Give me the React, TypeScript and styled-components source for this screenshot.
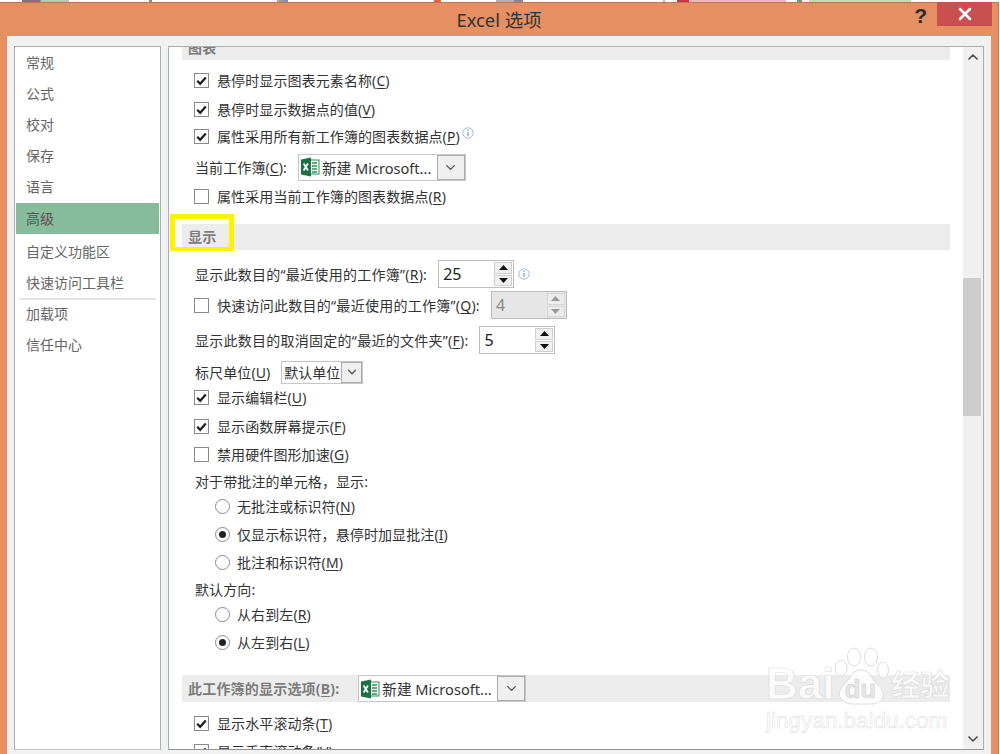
import React from 'react'
import styled, { createGlobalStyle } from 'styled-components'
import { ChevronDown, ChevronUp, X } from 'lucide-react'

const GlobalStyle = createGlobalStyle`
  html, body {
    margin: 0;
    padding: 0;
    background: #fff;
  }
  #root {
    width: 1000px;
    height: 754px;
    overflow: hidden;
    font-family: "Noto Sans", "Noto Sans CJK SC", sans-serif;
    font-size: 14px;
    color: #333;
  }
`

const BehindStrip = styled.div`
  height: 2px;
  background: linear-gradient(
    to right,
    #fff 22px, #777 22px, #777 40px, #9fd3a8 41px, #9fd3a8 69px, #fff 69px,
    #fff 149px, #6c8fd0 149px, #6c8fd0 152px, #fff 152px,
    #fff 277px, #c9a36a 277px, #6c8fd0 288px, #fff 288px,
    #fff 434px, #e0663c 434px, #e0663c 441px, #fff 441px,
    #fff 496px, #aab4c8 496px, #aab4c8 513px, #888 515px, #888 523px, #fff 523px,
    #fff 663px, #8ed08e 663px, #8ed08e 665px, #fff 665px,
    #fff 677px, #c8373c 677px, #c8373c 689px, #f5b4bc 689px, #f5b4bc 786px, #fff 786px,
    #fff 797px, #5aa85a 797px, #5aa85a 802px, #fff 802px,
    #fff 809px, #b4e2b0 809px, #b4e2b0 911px, #fff 911px
  );
`

const Window = styled.div`
  width: 999px;
  height: 752px;
  display: flex;
  flex-direction: column;
  position: relative;
  background: #e58f63;
  border-right: 1px solid #b8795a;
  border-top: 1px solid #b8795a;
  box-sizing: border-box;
`

const TitleBar = styled.div`
  height: 33px;
  flex: none;
  display: grid;
  grid-template-columns: 1fr auto 1fr;
`

const Title = styled.div`
  font-size: 18.4px;
  line-height: 33px;
  color: #333;
`

const TitleActions = styled.div`
  display: flex;
  justify-content: flex-end;
  align-items: flex-start;
  padding-right: 6px;
`

const HelpMark = styled.div`
  font-family: "Liberation Sans", sans-serif;
  font-size: 21px;
  font-weight: 700;
  line-height: 26px;
  margin-right: 10px;
  color: #2b2b2b;
`

const CloseButton = styled.div`
  width: 55px;
  height: 24px;
  margin-top: -1px;
  background: #c95050;
  color: #fff;
  display: flex;
  align-items: center;
  justify-content: center;
`

const Content = styled.div`
  flex: 1;
  min-height: 0;
  margin: 0 7px 0 7px;
  padding: 10px 7px 4px;
  background: #f1f1f1;
  display: flex;
  gap: 7px;
`

const Sidebar = styled.div`
  width: 147px;
  flex: none;
  box-sizing: border-box;
  background: #fff;
  border: 1px solid #a9aeb3;
  border-bottom-color: #c4c7ca;
  color: #666;
`

const NavItem = styled.div<{ $active?: boolean }>`
  height: 31px;
  line-height: 31px;
  margin: ${(p) => (p.$active ? '1px 1px 2px' : '0 1px')};
  padding-left: 10px;
  background: ${(p) => (p.$active ? '#86bc9b' : 'transparent')};
  color: ${(p) => (p.$active ? '#555' : '#666')};
`

const NavDivider = styled.div`
  height: 2px;
  margin: 0 4px -2px;
  background: #e4e4e4;
`

const Panel = styled.div`
  flex: 1;
  min-width: 0;
  box-sizing: border-box;
  display: flex;
  background: #fff;
  border: 1px solid #a9aeb3;
  border-bottom-color: #8f9499;
  overflow: hidden;
`

const ScrollArea = styled.div`
  flex: 1;
  min-width: 0;
  margin-top: -14px;
  padding: 0 13px;
`

const SectionHeader = styled.div<{ $gap?: number; $h?: number }>`
  position: relative;
  height: ${(p) => p.$h ?? 27}px;
  margin-top: ${(p) => p.$gap ?? 0}px;
  padding-left: 6px;
  display: flex;
  align-items: center;
  gap: 19px;
  background: #ececec;
  color: #7c7c7c;
  font-weight: 700;
  letter-spacing: 0.2px;
`

const HeaderText = styled.span`
  position: relative;
  top: -1px;
`

const Highlight = styled.div`
  position: absolute;
  left: -12px;
  top: -10px;
  width: 64px;
  height: 37px;
  box-sizing: border-box;
  border: 5px solid #fff200;
  border-bottom-width: 4px;
`

const Row = styled.div<{ $gap: number; $indent?: number; $wide?: boolean }>`
  height: 24px;
  margin-top: ${(p) => p.$gap}px;
  padding-left: ${(p) => p.$indent ?? 13}px;
  display: flex;
  align-items: center;
  gap: 11px;
  white-space: nowrap;
  letter-spacing: ${(p) => (p.$wide ? 0.26 : 0.1)}px;
`

const CheckLabel = styled.label`
  display: flex;
  align-items: center;
  gap: 8px;
  margin-left: -1px;
`

const Box = styled.span`
  width: 15px;
  height: 15px;
  flex: none;
  box-sizing: border-box;
  border: 1px solid #8a8a8a;
  background: #fff;
  display: flex;
  align-items: center;
  justify-content: center;
`

const RadioLabel = styled.label`
  display: flex;
  align-items: center;
  gap: 7px;
`

const RadioDot = styled.span<{ $on?: boolean }>`
  width: 15px;
  height: 15px;
  flex: none;
  box-sizing: border-box;
  border: 1px solid #8a8a8a;
  border-radius: 50%;
  background: #fff;
  display: flex;
  align-items: center;
  justify-content: center;
  &::after {
    content: '';
    width: 7px;
    height: 7px;
    border-radius: 50%;
    background: ${(p) => (p.$on ? '#222' : 'transparent')};
  }
`

const Key = styled.span`
  text-decoration: underline;
  text-underline-offset: 2px;
`

const Spin = styled.div<{ $disabled?: boolean }>`
  width: 76px;
  height: 28px;
  box-sizing: border-box;
  border: 1px solid #bcbcbc;
  background: ${(p) => (p.$disabled ? '#e6e6e6' : '#fff')};
  color: ${(p) => (p.$disabled ? '#888' : '#222')};
  display: flex;
  align-items: center;
  justify-content: space-between;
  padding: 1px 1px 1px 4px;
  font-size: 16px;
  letter-spacing: 0;
`

const SpinButtons = styled.div`
  width: 18px;
  align-self: stretch;
  display: flex;
  flex-direction: column;
  gap: 1px;
`

const SpinButton = styled.div<{ $disabled?: boolean }>`
  flex: 1;
  display: flex;
  align-items: center;
  justify-content: center;
  background: ${(p) => (p.$disabled ? '#ececec' : '#f0f0f0')};
  border: 1px solid ${(p) => (p.$disabled ? '#d6d6d6' : '#cfcfcf')};
  color: ${(p) => (p.$disabled ? '#999' : '#111')};
`

const Select = styled.div<{ $w: number; $h: number; $btn: number }>`
  width: ${(p) => p.$w}px;
  height: ${(p) => p.$h}px;
  box-sizing: border-box;
  border: 1px solid #c6c6c6;
  background: #fff;
  display: grid;
  grid-template-columns: 1fr ${(p) => p.$btn}px;
  font-weight: 400;
  color: #333;
  letter-spacing: 0;
`

const SelectValue = styled.div<{ $small?: boolean }>`
  display: flex;
  align-items: center;
  gap: 2px;
  padding-left: ${(p) => (p.$small ? 2 : 1)}px;
  overflow: hidden;
  font-size: ${(p) => (p.$small ? 14 : 14.6)}px;
  white-space: nowrap;
`

const SelectButton = styled.div`
  display: flex;
  align-items: center;
  justify-content: center;
  background: #f0f0f0;
  border: 1px solid #ababab;
  color: #555;
`

const Info = styled.svg`
  flex: none;
  margin-left: -7px;
`

const InfoRaised = styled(Info)`
  margin-left: -9px;
  margin-top: -6px;
`

const Scrollbar = styled.div`
  width: 20px;
  flex: none;
  display: flex;
  flex-direction: column;
  background: #f0f0f0;
  color: #505050;
`

const ScrollArrow = styled.div`
  height: 20px;
  flex: none;
  display: flex;
  align-items: center;
  justify-content: center;
`

const Track = styled.div`
  flex: 1;
  padding-top: 211px;
`

const Thumb = styled.div`
  width: 18px;
  height: 138px;
  background: #cdcdcd;
`

const Watermark = styled.div`
  position: absolute;
  left: 766px;
  top: 643px;
  width: 180px;
  pointer-events: none;
  color: rgba(255, 255, 255, 0.8);
  -webkit-text-stroke: 0.7px #dcdcdc;
`

const WatermarkTop = styled.div`
  display: flex;
  align-items: flex-end;
  height: 60px;
`

const BaiText = styled.span`
  font-family: "Liberation Sans", sans-serif;
  font-size: 44px;
  line-height: 44px;
  font-weight: 700;
`

const PawWrap = styled.div`
  position: relative;
  width: 56px;
  height: 60px;
  margin: 0 2px 0 -1px;
  -webkit-text-stroke: 0.5px #cfcfcf;
`

const DuText = styled.span`
  position: absolute;
  left: 11px;
  bottom: 3px;
  font-family: "Liberation Sans", sans-serif;
  font-size: 26px;
  line-height: 28px;
  font-weight: 700;
  color: #e6e6e6;
`

const JingYan = styled.span`
  font-size: 29px;
  line-height: 40px;
  margin-bottom: 1px;
  white-space: nowrap;
  font-weight: 700;
`

const WatermarkUrl = styled.div`
  font-family: "Liberation Sans", sans-serif;
  font-size: 22.5px;
  line-height: 26px;
  margin-top: 2px;
  -webkit-text-stroke: 0.5px #dcdcdc;
  white-space: nowrap;
`

const Check = ({ on, children }: { on?: boolean; children: React.ReactNode }) => (
  <CheckLabel>
    <Box>
      {on && (
        <svg width="13" height="13" viewBox="0 0 13 13">
          <path d="M2.2 6.8 L5.2 9.8 L10.8 3.4" fill="none" stroke="#222" strokeWidth="2.3" />
        </svg>
      )}
    </Box>
    <span>{children}</span>
  </CheckLabel>
)

const Radio = ({ on, children }: { on?: boolean; children: React.ReactNode }) => (
  <RadioLabel>
    <RadioDot $on={on} />
    <span>{children}</span>
  </RadioLabel>
)

const Triangle = ({ down }: { down?: boolean }) => (
  <svg width="9" height="5" viewBox="0 0 9 5">
    <polygon points={down ? '0,0 9,0 4.5,5' : '0,5 9,5 4.5,0'} fill="currentColor" />
  </svg>
)

const SpinBox = ({ value, disabled }: { value: string; disabled?: boolean }) => (
  <Spin $disabled={disabled}>
    <span>{value}</span>
    <SpinButtons>
      <SpinButton $disabled={disabled}>
        <Triangle />
      </SpinButton>
      <SpinButton $disabled={disabled}>
        <Triangle down />
      </SpinButton>
    </SpinButtons>
  </Spin>
)

const InfoGlyph = () => (
  <>
    <circle cx="6" cy="6" r="5.2" fill="#fff" stroke="#9dbde2" strokeWidth="1" />
    <rect x="5.4" y="2.6" width="1.2" height="1.3" fill="#6f9bd0" />
    <rect x="5.4" y="5" width="1.2" height="4.2" fill="#6f9bd0" />
  </>
)

const ExcelIcon = () => (
  <svg width="20" height="20" viewBox="0 0 20 20" style={{ flex: 'none' }}>
    <rect x="10" y="3" width="9" height="14" fill="#fff" stroke="#2f8a55" strokeWidth="1" />
    <path d="M12 6h5M12 9h5M12 12h5M12 15h5" stroke="#2f8a55" strokeWidth="1.4" />
    <polygon points="1,2.5 11,0.5 11,19.5 1,17.5" fill="#1d7044" />
    <path d="M3.6 6.5 L8 13.5 M8 6.5 L3.6 13.5" stroke="#fff" strokeWidth="1.7" />
  </svg>
)

const WorkbookSelect = () => (
  <Select $w={168} $h={27} $btn={28}>
    <SelectValue>
      <ExcelIcon />
      <span>新建 Microsoft...</span>
    </SelectValue>
    <SelectButton>
      <ChevronDown size={15} strokeWidth={2.2} />
    </SelectButton>
  </Select>
)

const App = () => {
  return (
    <>
      <GlobalStyle />
      <BehindStrip />
      <Window>
        <TitleBar>
          <span />
          <Title>Excel 选项</Title>
          <TitleActions>
            <HelpMark>?</HelpMark>
            <CloseButton>
              <X size={20} strokeWidth={3} />
            </CloseButton>
          </TitleActions>
        </TitleBar>

        <Content>
          <Sidebar>
            <NavItem>常规</NavItem>
            <NavItem>公式</NavItem>
            <NavItem>校对</NavItem>
            <NavItem>保存</NavItem>
            <NavItem>语言</NavItem>
            <NavItem $active>高级</NavItem>
            <NavItem>自定义功能区</NavItem>
            <NavItem>快速访问工具栏</NavItem>
            <NavDivider />
            <NavItem>加载项</NavItem>
            <NavItem>信任中心</NavItem>
          </Sidebar>

          <Panel>
            <ScrollArea>
              <SectionHeader>图表</SectionHeader>
              <Row $gap={8}>
                <Check on>悬停时显示图表元素名称(<Key>C</Key>)</Check>
              </Row>
              <Row $gap={5}>
                <Check on>悬停时显示数据点的值(<Key>V</Key>)</Check>
              </Row>
              <Row $gap={3}>
                <Check on>属性采用所有新工作簿的图表数据点(<Key>P</Key>)</Check>
                <InfoRaised width="12" height="12" viewBox="0 0 12 12">
                  <InfoGlyph />
                </InfoRaised>
              </Row>
              <Row $gap={7}>
                <span>当前工作簿(<Key>C</Key>):</span>
                <WorkbookSelect />
              </Row>
              <Row $gap={5}>
                <Check>属性采用当前工作簿的图表数据点(<Key>R</Key>)</Check>
              </Row>

              <SectionHeader $gap={16} $h={26}>
                <HeaderText>显示</HeaderText>
                <Highlight />
              </SectionHeader>
              <Row $gap={12} $wide>
                <span>显示此数目的“最近使用的工作簿”(<Key>R</Key>):</span>
                <SpinBox value="25" />
                <Info width="12" height="12" viewBox="0 0 12 12">
                  <InfoGlyph />
                </Info>
              </Row>
              <Row $gap={7} $wide>
                <Check>快速访问此数目的“最近使用的工作簿”(<Key>Q</Key>):</Check>
                <SpinBox value="4" disabled />
              </Row>
              <Row $gap={11} $wide>
                <span>显示此数目的取消固定的“最近的文件夹”(<Key>F</Key>):</span>
                <SpinBox value="5" />
              </Row>
              <Row $gap={8}>
                <span>标尺单位(<Key>U</Key>)</span>
                <Select $w={82} $h={23} $btn={21}>
                  <SelectValue $small>默认单位</SelectValue>
                  <SelectButton>
                    <ChevronDown size={14} strokeWidth={2.2} />
                  </SelectButton>
                </Select>
              </Row>
              <Row $gap={1}>
                <Check on>显示编辑栏(<Key>U</Key>)</Check>
              </Row>
              <Row $gap={5}>
                <Check on>显示函数屏幕提示(<Key>F</Key>)</Check>
              </Row>
              <Row $gap={4}>
                <Check>禁用硬件图形加速(<Key>G</Key>)</Check>
              </Row>
              <Row $gap={3}>
                <span>对于带批注的单元格，显示:</span>
              </Row>
              <Row $gap={1} $indent={33}>
                <Radio>无批注或标识符(<Key>N</Key>)</Radio>
              </Row>
              <Row $gap={4} $indent={33}>
                <Radio on>仅显示标识符，悬停时加显批注(<Key>I</Key>)</Radio>
              </Row>
              <Row $gap={4} $indent={33}>
                <Radio>批注和标识符(<Key>M</Key>)</Radio>
              </Row>
              <Row $gap={3}>
                <span>默认方向:</span>
              </Row>
              <Row $gap={1} $indent={33}>
                <Radio>从右到左(<Key>R</Key>)</Radio>
              </Row>
              <Row $gap={4} $indent={33}>
                <Radio on>从左到右(<Key>L</Key>)</Radio>
              </Row>

              <SectionHeader $gap={21}>
                <HeaderText>此工作簿的显示选项(<Key>B</Key>):</HeaderText>
                <WorkbookSelect />
              </SectionHeader>
              <Row $gap={9}>
                <Check on>显示水平滚动条(<Key>T</Key>)</Check>
              </Row>
              <Row $gap={4}>
                <Check on>显示垂直滚动条(<Key>V</Key>)</Check>
              </Row>
            </ScrollArea>

            <Scrollbar>
              <ScrollArrow>
                <ChevronUp size={16} strokeWidth={2.6} />
              </ScrollArrow>
              <Track>
                <Thumb />
              </Track>
              <ScrollArrow>
                <ChevronDown size={16} strokeWidth={2.6} />
              </ScrollArrow>
            </Scrollbar>
          </Panel>
        </Content>

        <Watermark>
          <WatermarkTop>
            <BaiText>Bai</BaiText>
            <PawWrap>
              <svg width="56" height="60" viewBox="0 0 56 60">
                <g fill="rgba(255,255,255,0.85)" stroke="#dcdcdc" strokeWidth="1">
                  <ellipse cx="8" cy="22" rx="6" ry="8" />
                  <ellipse cx="21" cy="11" rx="6.5" ry="9" />
                  <ellipse cx="38" cy="11" rx="6.5" ry="9" />
                  <ellipse cx="50" cy="24" rx="5.5" ry="8" />
                  <path d="M28 24 C18 24 17 34 10 40 C2 48 8 58 20 58 L38 58 C50 58 54 48 46 40 C38 34 38 24 28 24 Z" />
                </g>
              </svg>
              <DuText>du</DuText>
            </PawWrap>
            <JingYan>经验</JingYan>
          </WatermarkTop>
          <WatermarkUrl>jingyan.baidu.com</WatermarkUrl>
        </Watermark>
      </Window>
    </>
  )
}

export default App
